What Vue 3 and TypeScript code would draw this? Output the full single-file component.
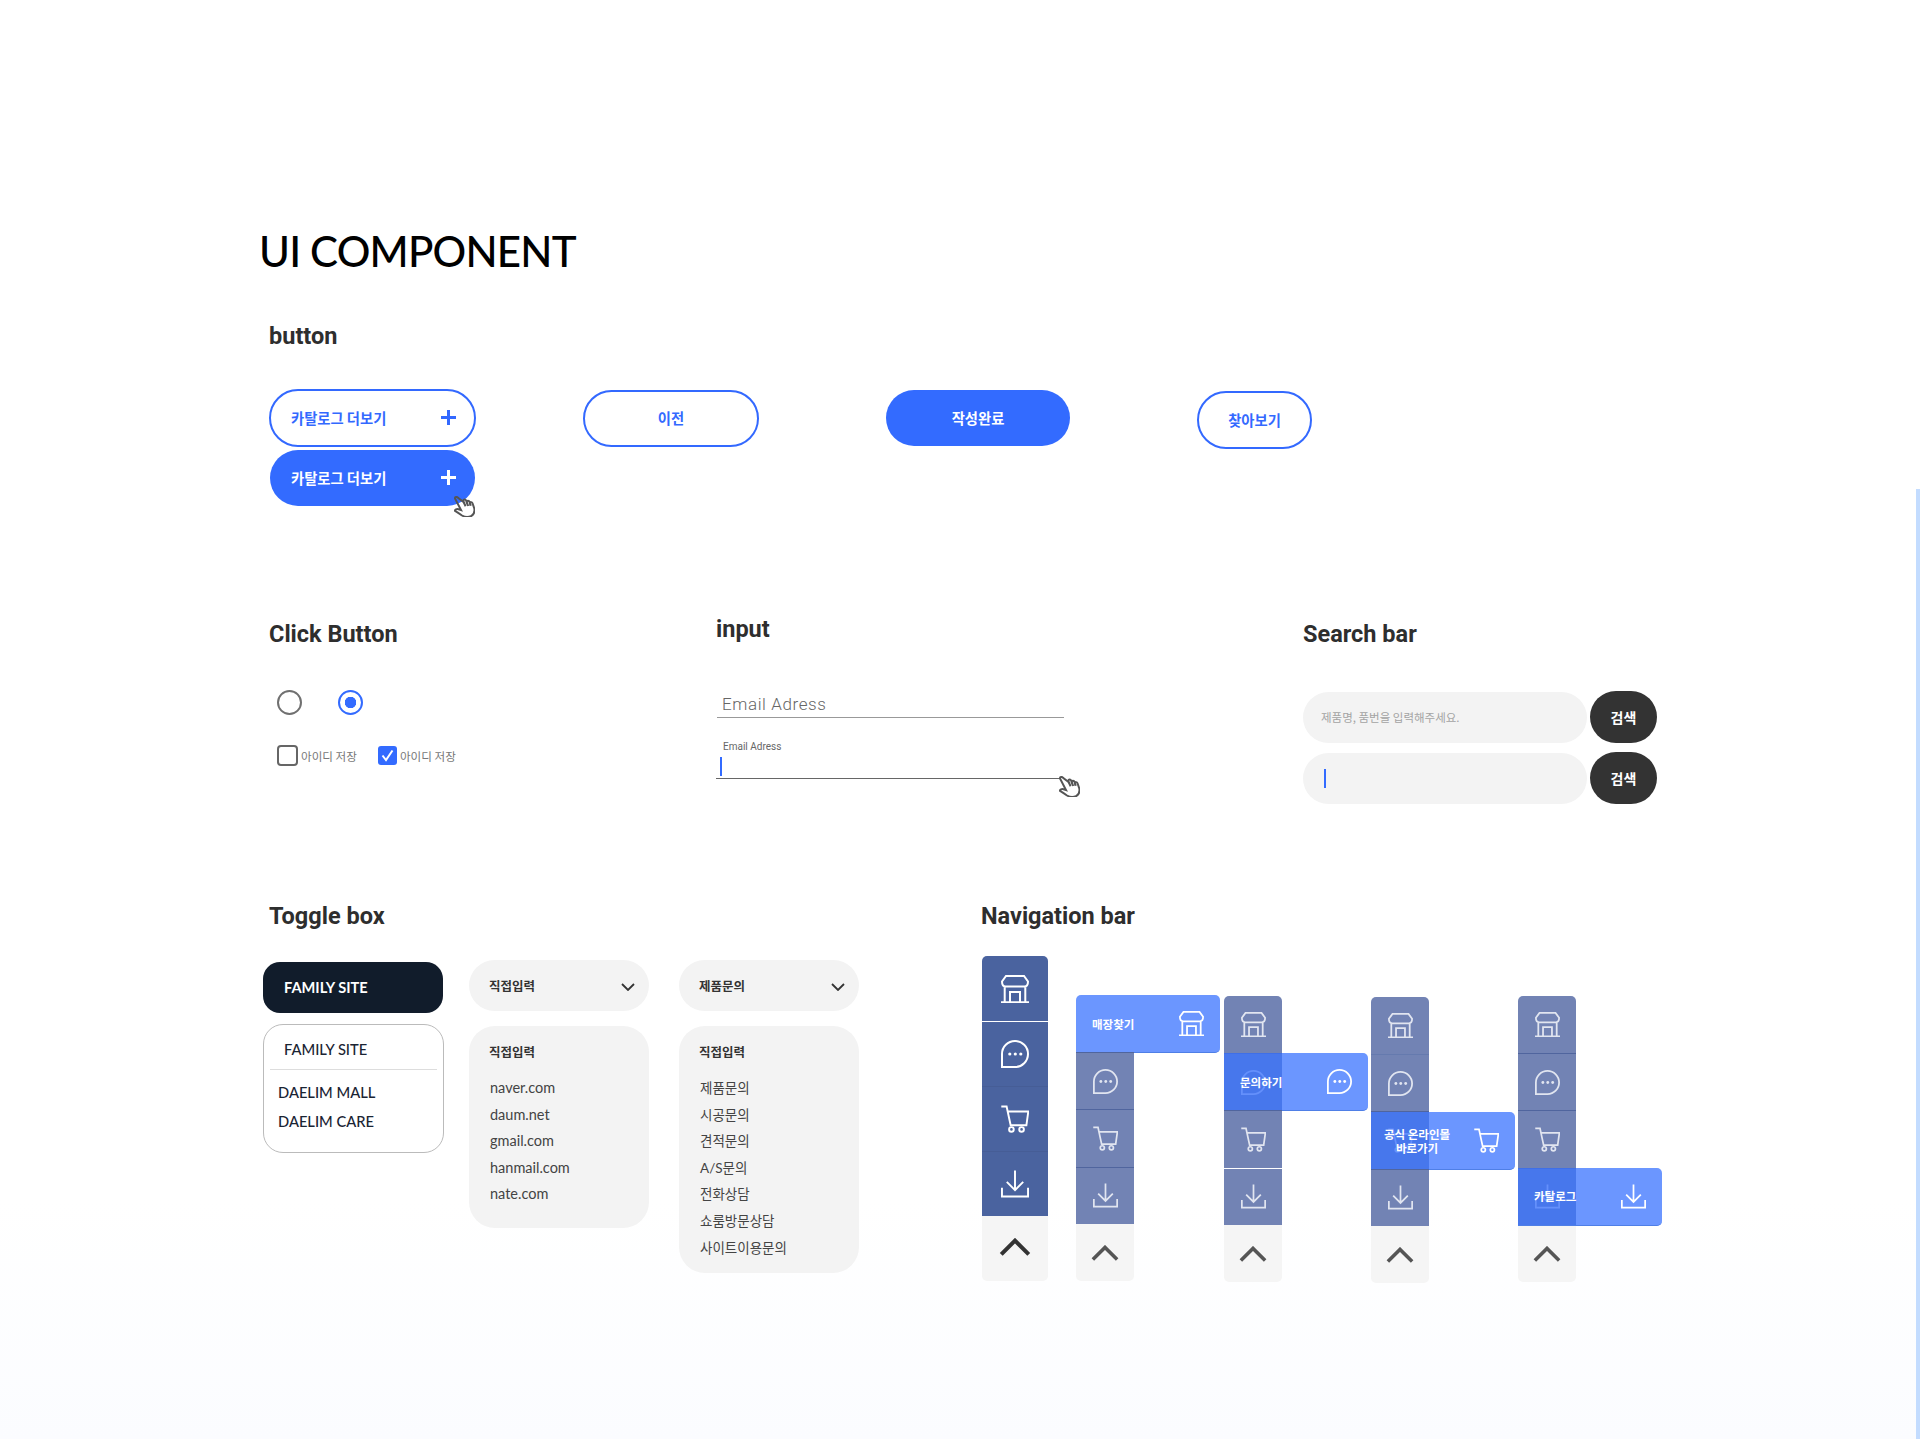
<script setup lang="ts">
type IconName = 'store' | 'chat' | 'cart' | 'download'

interface NavCell {
  icon: IconName
  divider?: 'white' | 'dark' | 'faint'
  hidden?: boolean
}

interface NavTip {
  at: number
  icon: IconName
  lines: string[]
}

interface NavColumn {
  top: number
  large?: boolean
  cells: NavCell[]
  tip?: NavTip
}

const iconOrder: IconName[] = ['store', 'chat', 'cart', 'download']

function cells(dividers: NavCell['divider'][], hiddenFirst = false): NavCell[] {
  return iconOrder.map((icon, i) => ({
    icon,
    divider: i === 0 ? undefined : dividers[i - 1],
    hidden: hiddenFirst && i === 0,
  }))
}

const navColumns: NavColumn[] = [
  { top: 0, large: true, cells: cells(['white', 'faint', 'faint']) },
  {
    top: 39,
    cells: cells(['dark', 'dark', 'dark'], true),
    tip: { at: 0, icon: 'store', lines: ['매장찾기'] },
  },
  {
    top: 40,
    cells: cells(['dark', 'dark', 'white']),
    tip: { at: 1, icon: 'chat', lines: ['문의하기'] },
  },
  {
    top: 41,
    cells: cells(['faint', 'dark', 'dark']),
    tip: { at: 2, icon: 'cart', lines: ['공식 온라인몰', '바로가기'] },
  },
  {
    top: 40,
    cells: cells(['dark', 'dark', 'dark']),
    tip: { at: 3, icon: 'download', lines: ['카탈로그'] },
  },
]

const mailDomains = ['naver.com', 'daum.net', 'gmail.com', 'hanmail.com', 'nate.com']
const inquiryTypes = ['제품문의', '시공문의', '견적문의', 'A/S문의', '전화상담', '쇼룸방문상담', '사이트이용문의']
</script>

<template>
  <div class="page">
    <svg class="sprite" aria-hidden="true">
      <symbol id="ic-store" viewBox="0 0 28 28">
        <path d="M5 1H23L27 6.5C27 9.5 25.5 11.5 23.5 11.5H4.5C2.5 11.5 1 9.5 1 6.5Z M3.7 11.5V27M24.3 11.5V27M0 27.2H28M9 27V17H19V27" />
      </symbol>
      <symbol id="ic-chat" viewBox="0 0 28 28">
        <path d="M1 27V14A13 13 0 1 1 14 27Z" />
        <circle class="dot" cx="8.8" cy="14" r="1.6" />
        <circle class="dot" cx="14.3" cy="14" r="1.6" />
        <circle class="dot" cx="19.8" cy="14" r="1.6" />
      </symbol>
      <symbol id="ic-cart" viewBox="0 0 29 28">
        <path d="M.3 1H5.8L10 20.5H26.3L28.3 6.2H7" />
        <circle cx="10.8" cy="24.8" r="2.4" />
        <circle cx="21.3" cy="24.8" r="2.4" />
      </symbol>
      <symbol id="ic-download" viewBox="0 0 29 28">
        <path d="M14.5 0V20M6 11.8L14.5 20.3L23 11.8M1 18V27H28V18" />
      </symbol>
      <symbol id="ic-hand" viewBox="0 0 21 21">
        <path d="M7 14L4.5 13.2C2.5 12.8 .8 13.5 1 14.8C3.5 16.2 6 18 8 19.5C11 21.2 15 21.2 17.5 19.8C20 18.2 20.8 15 20.3 12.5L18.5 7.2C18 5.8 16.3 5.8 15.9 7L15.6 6C15 4.3 13 4.3 12.6 5.7L12.2 4.6C11.5 3 9.6 3.2 9.3 4.7L9.6 6L4 1.8C3.2 .6 .8 .8 1 2.5Z" />
        <path d="M9.6 6L11.6 10.2M12.6 5.7L14.2 10M15.9 7L16.8 9.8" />
      </symbol>
    </svg>

    <h1 class="title">UI COMPONENT</h1>

    <section class="row-buttons">
      <h2 class="heading">button</h2>
      <div class="button-row">
        <div class="more-stack">
          <a class="pill pill-line pill-more">카탈로그 더보기<span class="plus"></span></a>
          <a class="pill pill-fill pill-more pill-hover">카탈로그 더보기<span class="plus"></span>
            <svg class="hand hand-button"><use href="#ic-hand" /></svg>
          </a>
        </div>
        <a class="pill pill-line pill-prev">이전</a>
        <a class="pill pill-fill pill-done">작성완료</a>
        <a class="pill pill-line pill-find">찾아보기</a>
      </div>
    </section>

    <section class="row-forms">
      <div class="col-click">
        <h2 class="heading">Click Button</h2>
        <div class="radios">
          <span class="radio"></span>
          <span class="radio radio-on"></span>
        </div>
        <div class="checks">
          <label class="check"><span class="box"></span>아이디 저장</label>
          <label class="check"><span class="box box-on">
            <svg viewBox="0 0 19 19"><path d="M4.5 9.5L8 14L14.5 4.5" /></svg>
          </span>아이디 저장</label>
        </div>
      </div>

      <div class="col-input">
        <h2 class="heading">input</h2>
        <div class="field-idle">Email Adress</div>
        <div class="field-active">
          <div class="field-label">Email Adress</div>
          <span class="caret"></span>
          <svg class="hand hand-input"><use href="#ic-hand" /></svg>
        </div>
      </div>

      <div class="col-search">
        <h2 class="heading">Search bar</h2>
        <div class="search">
          <div class="search-box search-hint">제품명, 품번을 입력해주세요.</div>
          <button class="search-btn">검색</button>
        </div>
        <div class="search">
          <div class="search-box"><span class="caret"></span></div>
          <button class="search-btn">검색</button>
        </div>
      </div>
    </section>

    <section class="row-bottom">
      <div class="col-toggle">
        <h2 class="heading">Toggle box</h2>
        <div class="toggle-grid">
          <div class="toggle-col">
            <div class="family-head">FAMILY SITE</div>
            <div class="family-panel">
              <div class="family-title">FAMILY SITE</div>
              <div class="family-item">DAELIM MALL</div>
              <div class="family-item">DAELIM CARE</div>
            </div>
          </div>
          <div class="toggle-col">
            <div class="select-head">직접입력
              <svg class="chevron" viewBox="0 0 14 8"><path d="M1 1L7 7L13 1" /></svg>
            </div>
            <div class="select-panel">
              <div class="select-title">직접입력</div>
              <div v-for="item in mailDomains" :key="item" class="select-item select-item-latin">{{ item }}</div>
            </div>
          </div>
          <div class="toggle-col">
            <div class="select-head">제품문의
              <svg class="chevron" viewBox="0 0 14 8"><path d="M1 1L7 7L13 1" /></svg>
            </div>
            <div class="select-panel">
              <div class="select-title">직접입력</div>
              <div v-for="item in inquiryTypes" :key="item" class="select-item">{{ item }}</div>
            </div>
          </div>
        </div>
      </div>

      <div class="col-nav">
        <h2 class="heading">Navigation bar</h2>
        <div class="nav-row">
          <div
            v-for="(nav, n) in navColumns"
            :key="n"
            class="nav"
            :class="{ 'nav-large': nav.large }"
            :style="{ marginTop: nav.top + 'px' }"
          >
            <div
              v-for="(cell, c) in nav.cells"
              :key="cell.icon"
              class="nav-cell"
              :class="[cell.divider ? 'div-' + cell.divider : '', { 'nav-blank': cell.hidden }]"
            >
              <svg v-if="!cell.hidden" class="nav-icon"><use :href="'#ic-' + cell.icon" /></svg>
              <div v-if="nav.tip && nav.tip.at === c" class="tip">
                <div class="tip-text">
                  <div v-for="line in nav.tip.lines" :key="line">{{ line }}</div>
                </div>
                <svg class="nav-icon tip-icon"><use :href="'#ic-' + nav.tip.icon" /></svg>
              </div>
            </div>
            <div class="nav-top">
              <svg viewBox="0 0 30 17"><path d="M2 15.5L15 2.5L28 15.5" /></svg>
            </div>
          </div>
        </div>
      </div>
    </section>

    <div class="edge-strip"></div>
  </div>
</template>

<style>
body {
  margin: 0;
}
</style>

<style scoped>
.page {
  position: relative;
  box-sizing: border-box;
  width: 1920px;
  height: 1439px;
  overflow: hidden;
  padding: 220px 0 0 260px;
  font-family: 'Noto Sans CJK KR', Roboto, sans-serif;
  background: linear-gradient(#fff 0, #fff 1200px, #fbfcff 1439px);
}

.sprite {
  position: absolute;
  width: 0;
  height: 0;
}

symbol path,
symbol circle {
  fill: none;
  stroke: currentColor;
  stroke-width: 2;
}

symbol .dot {
  fill: currentColor;
  stroke: none;
}

.title {
  margin: 0 0 0 -1px;
  font-family: Lato, sans-serif;
  font-size: 42px;
  line-height: 62px;
  font-weight: 500;
  letter-spacing: -0.8px;
  color: #000;
}

.heading {
  margin: 0;
  font-family: Roboto, sans-serif;
  font-size: 23.5px;
  line-height: 30px;
  font-weight: 700;
  color: #2e2e2e;
}

/* buttons */

.row-buttons {
  margin: 39px 0 0 9px;
}

.button-row {
  display: flex;
  align-items: flex-start;
  margin-top: 38px;
}

.more-stack {
  display: flex;
  flex-direction: column;
  gap: 3px;
  width: 207px;
  margin-right: 107px;
}

.pill {
  box-sizing: border-box;
  display: flex;
  align-items: center;
  justify-content: center;
  padding-bottom: 2px;
  font-size: 14.3px;
  font-weight: 700;
}

.pill-line {
  border: 2px solid #3369ff;
  background: #fff;
  color: #3369ff;
}

.pill-fill {
  background: #336bff;
  color: #fff;
}

.pill-more {
  position: relative;
  justify-content: space-between;
  height: 58px;
  padding: 0 18px 2px 20px;
  border-radius: 29px;
}

.pill-hover {
  height: 56px;
  margin: 0 1px;
  padding: 0 19px 2px 21px;
  border-radius: 28px;
}

.plus {
  position: relative;
  display: block;
  width: 15px;
  height: 15px;
}

.plus::before,
.plus::after {
  content: '';
  position: absolute;
  background: currentColor;
}

.plus::before {
  left: 0;
  right: 0;
  top: 6px;
  height: 3px;
}

.plus::after {
  top: 0;
  bottom: 0;
  left: 6px;
  width: 3px;
}

.pill-prev {
  width: 176px;
  height: 57px;
  margin: 1px 127px 0 0;
  border-radius: 29px;
}

.pill-done {
  width: 184px;
  height: 56px;
  margin: 1px 127px 0 0;
  border-radius: 28px;
}

.pill-find {
  width: 115px;
  height: 58px;
  margin-top: 2px;
  border-radius: 29px;
}

.hand {
  position: absolute;
  width: 21px;
  height: 21px;
  color: #555;
}

.hand :deep(use) {
  fill: #fff;
}

.hand-button {
  right: 0;
  bottom: -11px;
}

.hand-input {
  right: -19px;
  top: 58px;
}

/* forms */

.row-forms {
  display: flex;
  align-items: flex-start;
  margin: 113px 0 0 9px;
}

.col-click {
  width: 447px;
}

.radios {
  display: flex;
  gap: 36px;
  margin: 41px 0 0 8px;
}

.radio {
  box-sizing: border-box;
  width: 25px;
  height: 25px;
  border: 2px solid #707070;
  border-radius: 50%;
}

.radio-on {
  border-color: #336bff;
  background: radial-gradient(circle, #336bff 0 5.5px, transparent 6px);
}

.checks {
  display: flex;
  gap: 21px;
  margin: 30px 0 0 8px;
}

.check {
  display: flex;
  align-items: center;
  gap: 3px;
  font-size: 11.6px;
  color: #777;
}

.box {
  box-sizing: border-box;
  width: 21px;
  height: 21px;
  border: 2px solid #666;
  border-radius: 4px;
}

.box-on {
  width: 19px;
  height: 19px;
  border: 0;
  border-radius: 3px;
  background: #336bff;
}

.box-on svg {
  display: block;
}

.box-on path {
  fill: none;
  stroke: #fff;
  stroke-width: 2;
}

.col-input {
  width: 587px;
  margin-top: -5px;
}

.field-idle {
  box-sizing: border-box;
  width: 347px;
  height: 25.5px;
  margin: 48px 0 0 1px;
  padding-left: 5px;
  border-bottom: 1.5px solid #999;
  font-family: Roboto, sans-serif;
  font-size: 17px;
  font-weight: 300;
  line-height: 24px;
  letter-spacing: 0.6px;
  color: #666;
}

.field-active {
  position: relative;
  box-sizing: border-box;
  width: 345px;
  height: 61px;
  padding: 23px 0 0 4px;
  border-bottom: 1.5px solid #666;
}

.field-label {
  padding-left: 3px;
  font-family: Roboto, sans-serif;
  font-size: 10px;
  line-height: 12px;
  color: #666;
}

.caret {
  display: block;
  width: 2px;
  height: 19px;
  margin-top: 4px;
  background: #336bff;
}

.search {
  display: flex;
  align-items: center;
  gap: 3px;
  height: 52px;
}

.search + .search {
  margin-top: 9px;
}

.search-box {
  box-sizing: border-box;
  display: flex;
  align-items: center;
  width: 284px;
  height: 51px;
  padding-left: 21px;
  border-radius: 26px;
  background: #f3f3f3;
}

.search-box .caret {
  margin: 0;
}

.search-hint {
  padding-left: 18px;
  font-size: 11.5px;
  color: #a3a3a3;
}

.search-btn {
  width: 67px;
  height: 52px;
  padding: 0;
  border: 0;
  border-radius: 26px;
  background: #333;
  font-family: inherit;
  font-size: 14px;
  font-weight: 700;
  color: #fff;
}

.col-search .heading {
  margin-bottom: 42px;
}

/* toggle box */

.row-bottom {
  display: flex;
  align-items: flex-start;
  margin: 98px 0 0 3px;
}

.col-toggle {
  width: 719px;
}

.col-toggle .heading {
  margin: -1px 0 0 6px;
}

.col-nav .heading {
  margin: -1px 0 0 -1px;
}

.toggle-grid {
  display: flex;
  gap: 26px;
  margin-top: 29px;
}

.toggle-col {
  width: 180px;
}

.toggle-col:last-child {
  margin-left: 4px;
}

.family-head {
  height: 51px;
  margin-top: 2px;
  padding-left: 21px;
  border-radius: 17px;
  background: #111c2b;
  font-family: Lato, sans-serif;
  font-size: 14.6px;
  font-weight: 700;
  line-height: 51px;
  color: #fff;
}

.family-panel {
  box-sizing: border-box;
  width: 181px;
  height: 129px;
  margin-top: 11px;
  padding: 0 6px;
  border: 1px solid #bbb;
  border-radius: 20px;
  font-family: Lato, sans-serif;
  font-size: 14.7px;
  font-weight: 500;
  color: #1a2433;
}

.family-title {
  box-sizing: border-box;
  height: 45px;
  margin-bottom: 8px;
  padding: 5px 0 0 14px;
  border-bottom: 1px solid #ddd;
  line-height: 39px;
}

.family-item {
  padding-left: 8px;
  line-height: 29px;
}

.select-head {
  position: relative;
  height: 51px;
  padding-left: 20px;
  border-radius: 26px;
  background: #f3f3f3;
  font-size: 12.5px;
  font-weight: 700;
  line-height: 51px;
  color: #333;
}

.chevron {
  position: absolute;
  right: 14px;
  top: 23px;
  width: 14px;
  height: 8px;
  fill: none;
  stroke: #333;
  stroke-width: 1.8;
}

.select-panel {
  box-sizing: border-box;
  min-height: 202px;
  margin-top: 15px;
  padding: 13px 20px 12px;
  border-radius: 26px;
  background: #f3f3f3;
}

.select-title {
  margin-bottom: 10px;
  font-size: 12.5px;
  font-weight: 700;
  line-height: 26px;
  color: #333;
}

.select-item {
  padding-left: 1px;
  font-family: Lato, 'Noto Sans CJK KR', sans-serif;
  font-size: 13.5px;
  line-height: 26.6px;
  color: #444;
}

.select-item-latin {
  font-size: 14.5px;
}

/* navigation */

.nav-row {
  display: flex;
  align-items: flex-start;
  gap: 89px;
  margin-top: 25px;
}

.nav {
  width: 58px;
  --cell: #7283b4;
  --cell-h: 57.2px;
  color: #e1e5f0;
}

.nav:nth-child(2) {
  margin-left: -61px;
}

.nav:nth-child(3) {
  margin-left: 1px;
}

.nav-large {
  width: 66px;
  --cell: #4a639f;
  --cell-h: 65px;
  color: #fff;
}

.nav-cell {
  box-sizing: border-box;
  position: relative;
  display: flex;
  align-items: center;
  justify-content: center;
  height: var(--cell-h);
  background: var(--cell);
}

.nav-cell:first-child {
  border-radius: 5px 5px 0 0;
}

.nav-blank {
  background: transparent;
}

.div-white {
  border-top: 1px solid #fff;
}

.div-dark {
  border-top: 1px solid #50659e;
}

.div-faint {
  border-top: 1px solid #657aae;
}

.nav-large .div-faint {
  border-top-color: #465d96;
}

.nav-icon {
  width: 25px;
  height: 25px;
}

.nav-large .nav-icon {
  width: 28px;
  height: 28px;
}

.nav-top {
  display: flex;
  align-items: center;
  justify-content: center;
  height: 57.5px;
  border-radius: 0 0 5px 5px;
  background: #f5f5f5;
}

.nav-large .nav-top {
  height: 65px;
}

.nav-top svg {
  width: 28px;
  height: 16px;
  fill: none;
  stroke: #555;
  stroke-width: 3.8;
}

.nav-large .nav-top svg {
  width: 32px;
  height: 18px;
  stroke: #333;
  margin-top: -3px;
}

.tip {
  box-sizing: border-box;
  position: absolute;
  left: 0;
  top: -1px;
  display: flex;
  align-items: center;
  justify-content: space-between;
  width: 144px;
  height: 58px;
  padding: 0 16px 0 16px;
  border-radius: 0 5px 5px 0;
  border-bottom: 1px solid #4f7fe6;
  background: rgba(58, 115, 255, 0.75);
  color: #fff;
}

.nav:nth-child(2) .tip {
  top: 0;
  border-radius: 5px 5px 5px 0;
}

.nav:nth-child(4) .tip {
  top: 0;
  padding-left: 13px;
}

.tip-text {
  font-size: 11.5px;
  font-weight: 700;
  line-height: 14px;
  text-align: center;
}

.tip-icon {
  flex: none;
}

.edge-strip {
  position: absolute;
  right: 0;
  top: 489px;
  bottom: 0;
  width: 4px;
  background: #c3dcff;
}
</style>
